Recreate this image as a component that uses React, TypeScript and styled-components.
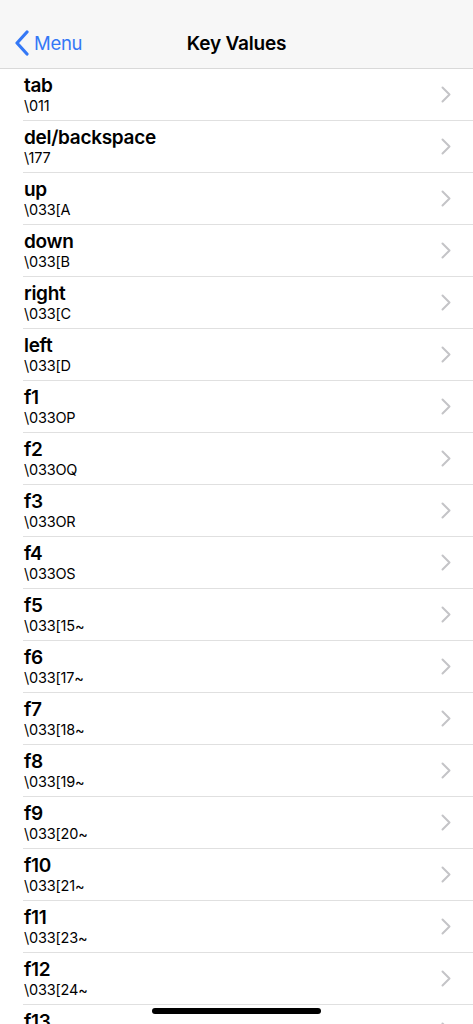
import React from 'react'
import styled, {createGlobalStyle} from 'styled-components'

const GlobalStyle = createGlobalStyle`
    html, body {
        margin: 0;
        padding: 0;
        background: #ffffff;
        overflow: hidden;
    }
    body {
        font-family: Inter, "Noto Sans", "Liberation Sans", sans-serif;
        -webkit-font-smoothing: antialiased;
    }
`

const keys = [
    {name: 'tab', value: '\\011'},
    {name: 'del/backspace', value: '\\177'},
    {name: 'up', value: '\\033[A'},
    {name: 'down', value: '\\033[B'},
    {name: 'right', value: '\\033[C'},
    {name: 'left', value: '\\033[D'},
    {name: 'f1', value: '\\033OP'},
    {name: 'f2', value: '\\033OQ'},
    {name: 'f3', value: '\\033OR'},
    {name: 'f4', value: '\\033OS'},
    {name: 'f5', value: '\\033[15~'},
    {name: 'f6', value: '\\033[17~'},
    {name: 'f7', value: '\\033[18~'},
    {name: 'f8', value: '\\033[19~'},
    {name: 'f9', value: '\\033[20~'},
    {name: 'f10', value: '\\033[21~'},
    {name: 'f11', value: '\\033[23~'},
    {name: 'f12', value: '\\033[24~'},
    {name: 'f13', value: '\\033[25~'},
]

const Screen = styled.div`
    width: 473px;
    height: 1024px;
    overflow: hidden;
    display: flex;
    flex-direction: column;
`
const NavBar = styled.div`
    height: 69px;
    flex-shrink: 0;
    background: #f7f7f7;
    border-bottom: 1px solid #d9d9d9;
    padding-top: 18px;
    box-sizing: border-box;
    display: grid;
    grid-template-columns: 1fr auto 1fr;
    align-items: center;
`
const BackButton = styled.div`
    display: flex;
    align-items: center;
    gap: 4px;
    padding-left: 14px;
    color: #3478f6;
    font-size: 18.5px;
    letter-spacing: -0.3px;
`
const Title = styled.div`
    font-size: 19px;
    font-weight: 600;
    color: #000;
    letter-spacing: -0.2px;
`
const List = styled.div`
    display: flex;
    flex-direction: column;
`
const Row = styled.div`
    padding-left: 23px;
`
const RowInner = styled.div`
    height: 51px;
    border-bottom: 1px solid #e0e0e0;
    display: flex;
    align-items: center;
    padding-right: 22px;
`
const RowText = styled.div`
    flex: 1;
    display: flex;
    flex-direction: column;
    padding-left: 1px;
    margin-top: 0px;
`
const KeyName = styled.div`
    font-size: 19px;
    line-height: 22px;
    font-weight: 600;
    color: #000;
    letter-spacing: -0.3px;
`
const KeyValue = styled.div`
    font-size: 14.5px;
    line-height: 17px;
    color: #000;
    letter-spacing: -0.2px;
`
const HomeIndicator = styled.div`
    position: fixed;
    left: 152px;
    top: 1008px;
    width: 169px;
    height: 6px;
    border-radius: 3px;
    background: #000;
`

const BackChevron = () => (
    <svg width="16" height="26" viewBox="0 0 16 26">
        <path d="M13 2 L3 13 L13 24" fill="none" stroke="#3478f6" strokeWidth="3.2" strokeLinecap="round" strokeLinejoin="round" />
    </svg>
)

const Disclosure = () => (
    <svg width="10" height="17" viewBox="0 0 10 17">
        <path d="M1.5 1.5 L8.5 8.5 L1.5 15.5" fill="none" stroke="#c4c4c7" strokeWidth="2" strokeLinecap="round" strokeLinejoin="round" />
    </svg>
)

export default function App(): JSX.Element {
    return (
        <>
            <GlobalStyle />
            <Screen>
                <NavBar>
                    <BackButton>
                        <BackChevron />
                        Menu
                    </BackButton>
                    <Title>Key Values</Title>
                    <div />
                </NavBar>
                <List>
                    {keys.map(k => (
                        <Row key={k.name}>
                            <RowInner>
                                <RowText>
                                    <KeyName>{k.name}</KeyName>
                                    <KeyValue>{k.value}</KeyValue>
                                </RowText>
                                <Disclosure />
                            </RowInner>
                        </Row>
                    ))}
                </List>
            </Screen>
            <HomeIndicator />
        </>
    )
}
